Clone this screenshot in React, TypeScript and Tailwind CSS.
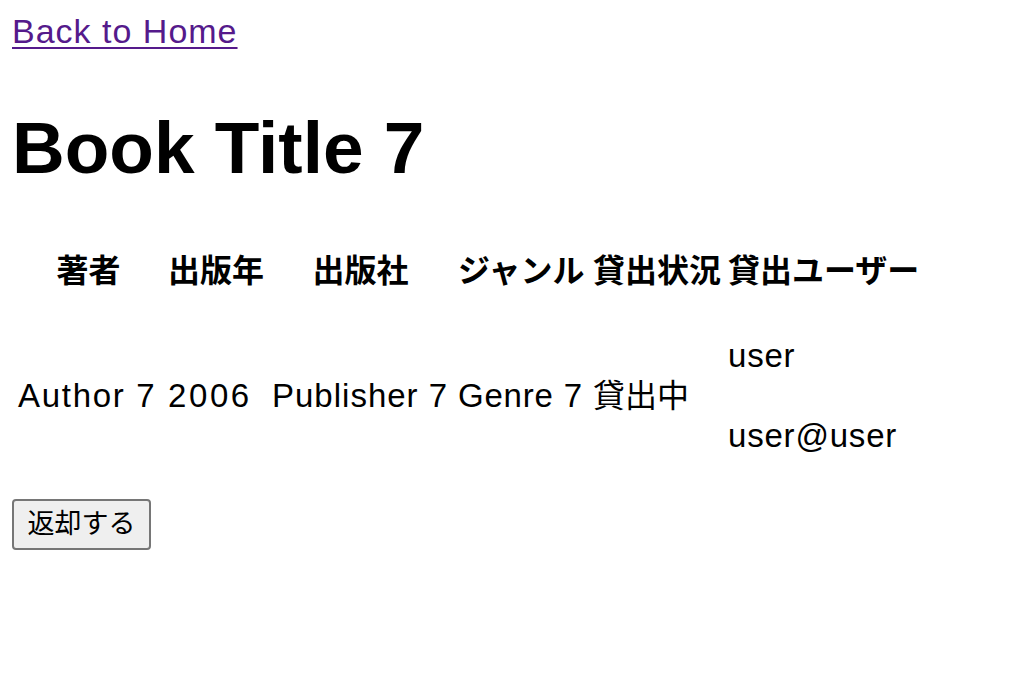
export default function App() {
  const latin = "[font-family:'Liberation_Sans','Noto_Sans_CJK_JP',sans-serif]";
  return (
    <div className={`min-h-[692px] bg-white px-3 text-black ${latin}`}>
      <div className="mt-[7px] h-[48px] text-[34px] leading-[48px] tracking-[1px]">
        <a href="#" className="text-[#551a8b] underline decoration-2 underline-offset-[4px]">
          Back to Home
        </a>
      </div>

      <h1 className="mt-[53px] h-[80px] text-[73px] font-bold leading-[80px]">Book Title 7</h1>

      <div className="pl-[6px]">
        <div className="mt-[56px] grid h-[48px] grid-cols-[141px_95px_177px_126px_126px_190px] gap-x-[9px] whitespace-nowrap text-center text-[32px] font-bold leading-[48px] [font-family:'Noto_Sans_CJK_JP',sans-serif]">
          <div className="whitespace-nowrap">著者</div>
          <div className="whitespace-nowrap">出版年</div>
          <div className="whitespace-nowrap">出版社</div>
          <div className="whitespace-nowrap">ジャンル</div>
          <div className="whitespace-nowrap">貸出状況</div>
          <div className="whitespace-nowrap">貸出ユーザー</div>
        </div>

        <div className="mt-[40px] grid h-[128px] grid-cols-[141px_95px_177px_126px_126px_190px] items-center gap-x-[9px] text-[33px] leading-[48px]">
          <div className="whitespace-nowrap tracking-[1.7px]">Author 7</div>
          <div className="whitespace-nowrap tracking-[2.6px]">2006</div>
          <div className="whitespace-nowrap tracking-[1px]">Publisher 7</div>
          <div className="whitespace-nowrap tracking-[0.8px]">Genre 7</div>
          <div className="whitespace-nowrap text-[32px]">貸出中</div>
          <div className="flex flex-col gap-[32px] tracking-[0.8px]">
            <p>user</p>
            <p>user@user</p>
          </div>
        </div>
      </div>

      <button className="mt-[39px] flex h-[51px] w-[139px] items-center justify-center rounded-[4px] border-2 border-[#767676] bg-[#efefef] pb-[1px] text-[27px] leading-none text-black">
        返却する
      </button>
    </div>
  );
}
